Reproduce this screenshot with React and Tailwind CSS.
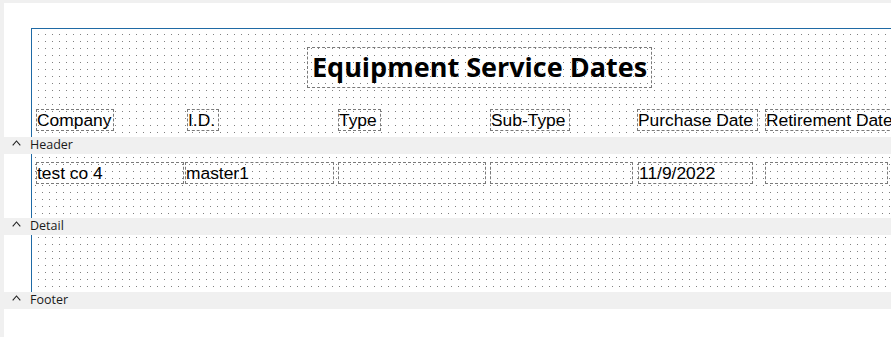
import React from "react";

const dots =
  "bg-[radial-gradient(circle_at_center,#808080_0.8px,transparent_0.8px)] bg-[length:7px_7px]";

const headerFields = [
  { label: "Company", cls: "left-[4px] w-[78px]" },
  { label: "I.D.", cls: "left-[155px] w-[32px]" },
  { label: "Type", cls: "left-[306px] w-[43px]" },
  { label: "Sub-Type", cls: "left-[458px] w-[80px]" },
  { label: "Purchase Date", cls: "left-[605px] w-[121px]" },
  { label: "Retirement Date", cls: "left-[733px] w-[140px]" },
];

const detailFields = [
  { value: "test co 4", cls: "left-[4px] w-[148px]" },
  { value: "master1", cls: "left-[153px] w-[149px]" },
  { value: "", cls: "left-[306px] w-[148px]" },
  { value: "", cls: "left-[458px] w-[143px]" },
  { value: "11/9/2022", cls: "left-[606px] w-[115px]" },
  { value: "", cls: "left-[733px] w-[123px]" },
];

const Field = ({ text, className }) => (
  <div
    className={`absolute h-[22px] border border-dashed border-[#7a7a7a] text-[17.4px] leading-[20px] text-black whitespace-nowrap overflow-hidden font-['Liberation_Sans',Arial,sans-serif] ${className}`}
  >
    {text}
  </div>
);

const Band = ({ label }) => (
  <div className="h-[17px] bg-[#f0f0f0] flex items-center text-[12.5px] text-[#1a1a1a] font-['Open_Sans','Noto_Sans',sans-serif]">
    <svg width="9" height="6" viewBox="0 0 9 6" className="ml-[8px] mr-[9px] -mt-[5px]">
      <path d="M0.7 5.3 L4.5 1 L8.3 5.3" fill="none" stroke="#222" strokeWidth="1.1" />
    </svg>
    <span className="leading-none">{label}</span>
  </div>
);

export default function App() {
  return (
    <div className="w-[891px] h-[337px] bg-[#f0f0f0] pt-[3px] pl-[4px] overflow-hidden">
      <div className="h-full bg-white flex flex-col">
        <div className="h-[25px]" />

        <div
          className={`relative h-[109px] ml-[27px] border-l border-t border-[#1f6aa5] ${dots} bg-[position:3px_2px]`}
        >
          <div className="absolute left-[275px] top-[18px] w-[345px] h-[41px] border border-dashed border-[#7a7a7a] flex items-center justify-center text-[27px] font-bold text-black font-['Open_Sans','Noto_Sans',sans-serif] whitespace-nowrap">
            Equipment Service Dates
          </div>
          {headerFields.map((f) => (
            <Field key={f.label} text={f.label} className={`top-[80px] ${f.cls}`} />
          ))}
        </div>

        <Band label="Header" />

        <div
          className={`relative h-[64px] ml-[27px] border-l border-[#1f6aa5] ${dots} bg-[position:0px_0px]`}
        >
          {detailFields.map((f, i) => (
            <Field key={i} text={f.value} className={`top-[8px] ${f.cls}`} />
          ))}
        </div>

        <Band label="Detail" />

        <div
          className={`h-[57px] ml-[27px] border-l border-[#1f6aa5] ${dots} bg-[position:3px_6px]`}
        />

        <Band label="Footer" />

        <div className="flex-1" />
      </div>
    </div>
  );
}
